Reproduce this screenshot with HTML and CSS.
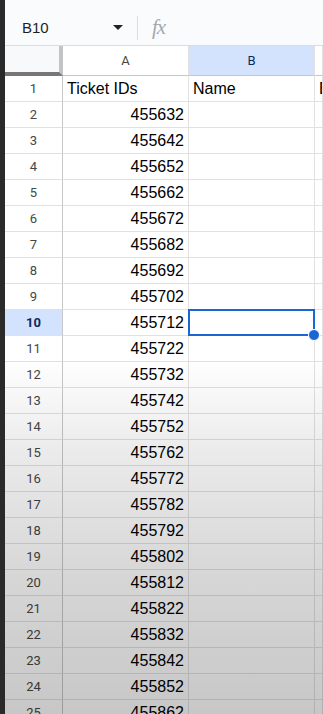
FILE: index.html
```html
<!DOCTYPE html>
<html lang="en">
<head>
  <meta charset="UTF-8" />
  <meta name="viewport" content="width=device-width, initial-scale=1.0" />
  <title>Ticket IDs - Sheet</title>
  <link rel="stylesheet" href="styles.css">
</head>
<body>

  <div class="strip"></div>

  <div class="main">
    <div class="formula-bar">
      <div class="name-box">B10</div>
      <div class="caret"></div>
      <div class="divider"></div>
      <div class="fx">fx</div>
    </div>

    <div class="sheet">
      <div class="corner"></div>
      <div class="col-head">A</div>
      <div class="col-head selected">B</div>
      <div class="col-head"></div>

      <div class="row-head">1</div><div class="cell text">Ticket IDs</div><div class="cell text">Name</div><div class="cell text">Email</div>
      <div class="row-head">2</div><div class="cell num">455632</div><div class="cell"></div><div class="cell"></div>
      <div class="row-head">3</div><div class="cell num">455642</div><div class="cell"></div><div class="cell"></div>
      <div class="row-head">4</div><div class="cell num">455652</div><div class="cell"></div><div class="cell"></div>
      <div class="row-head">5</div><div class="cell num">455662</div><div class="cell"></div><div class="cell"></div>
      <div class="row-head">6</div><div class="cell num">455672</div><div class="cell"></div><div class="cell"></div>
      <div class="row-head">7</div><div class="cell num">455682</div><div class="cell"></div><div class="cell"></div>
      <div class="row-head">8</div><div class="cell num">455692</div><div class="cell"></div><div class="cell"></div>
      <div class="row-head">9</div><div class="cell num">455702</div><div class="cell"></div><div class="cell"></div>
      <div class="row-head selected">10</div><div class="cell num">455712</div><div class="cell active"></div><div class="cell"></div>
      <div class="row-head">11</div><div class="cell num">455722</div><div class="cell"></div><div class="cell"></div>
      <div class="row-head">12</div><div class="cell num">455732</div><div class="cell"></div><div class="cell"></div>
      <div class="row-head">13</div><div class="cell num">455742</div><div class="cell"></div><div class="cell"></div>
      <div class="row-head">14</div><div class="cell num">455752</div><div class="cell"></div><div class="cell"></div>
      <div class="row-head">15</div><div class="cell num">455762</div><div class="cell"></div><div class="cell"></div>
      <div class="row-head">16</div><div class="cell num">455772</div><div class="cell"></div><div class="cell"></div>
      <div class="row-head">17</div><div class="cell num">455782</div><div class="cell"></div><div class="cell"></div>
      <div class="row-head">18</div><div class="cell num">455792</div><div class="cell"></div><div class="cell"></div>
      <div class="row-head">19</div><div class="cell num">455802</div><div class="cell"></div><div class="cell"></div>
      <div class="row-head">20</div><div class="cell num">455812</div><div class="cell"></div><div class="cell"></div>
      <div class="row-head">21</div><div class="cell num">455822</div><div class="cell"></div><div class="cell"></div>
      <div class="row-head">22</div><div class="cell num">455832</div><div class="cell"></div><div class="cell"></div>
      <div class="row-head">23</div><div class="cell num">455842</div><div class="cell"></div><div class="cell"></div>
      <div class="row-head">24</div><div class="cell num">455852</div><div class="cell"></div><div class="cell"></div>
      <div class="row-head">25</div><div class="cell num">455862</div><div class="cell"></div><div class="cell"></div>
    </div>
  </div>

</body>
</html>
```

FILE: styles.css
```css
* {
  margin: 0;
  padding: 0;
  box-sizing: border-box;
}

body {
  display: flex;
  height: 714px;
  overflow: hidden;
  background: #ffffff;
  font-family: "Liberation Sans", Arial, sans-serif;
}

.strip {
  width: 5px;
  flex-shrink: 0;
  background: #2a2a2a;
}

.main {
  position: relative;
  flex: 1;
  overflow: hidden;
}

/* darkening towards the bottom of the frame */
.main::after {
  content: "";
  position: absolute;
  inset: 0;
  pointer-events: none;
  background: linear-gradient(to bottom,
    rgba(0,0,0,0) 50%,
    rgba(0,0,0,0.08) 63%,
    rgba(0,0,0,0.16) 81%,
    rgba(0,0,0,0.22) 100%);
}

.formula-bar {
  height: 46px;
  display: flex;
  align-items: center;
  padding: 10px 0 0 17px;
  background: #f9fbfd;
  border-bottom: 1px solid #dadce0;
}

.name-box {
  width: 91px;
  font-size: 15px;
  color: #1f1f1f;
}

.caret {
  width: 0;
  height: 0;
  border-left: 5px solid transparent;
  border-right: 5px solid transparent;
  border-top: 5px solid #222222;
  margin-right: 14px;
}

.divider {
  width: 1px;
  height: 24px;
  background: #dadce0;
  margin-right: 14px;
}

.fx {
  font-family: "Liberation Serif", serif;
  font-style: italic;
  font-size: 21px;
  color: #a8a8a8;
  letter-spacing: -1px;
}

.sheet {
  display: grid;
  grid-template-columns: 58px 126px 126px 1fr;
  grid-template-rows: 30px;
  grid-auto-rows: 26px;
}

.corner {
  background: #f8f9fa;
  border-right: 4px solid #c4c4c4;
  border-bottom: 4px solid #777777;
}

.col-head {
  display: flex;
  align-items: center;
  justify-content: center;
  font-family: Roboto, sans-serif;
  font-size: 13px;
  color: #444746;
  background: #ffffff;
  border-right: 1px solid #e1e1e1;
  border-bottom: 1px solid #c7c7c7;
}

.col-head.selected {
  background: #d3e3fd;
  color: #0b2a5c;
}

.row-head {
  display: flex;
  align-items: center;
  justify-content: center;
  font-family: Roboto, sans-serif;
  font-size: 13px;
  color: #444746;
  border-right: 1px solid #c7c7c7;
  border-bottom: 1px solid #e1e1e1;
}

.row-head.selected {
  background: #d3e3fd;
  color: #0b2a5c;
  font-weight: bold;
}

.cell {
  display: flex;
  align-items: center;
  font-size: 16px;
  color: #000000;
  white-space: nowrap;
  overflow: hidden;
  border-right: 1px solid #e1e1e1;
  border-bottom: 1px solid #e1e1e1;
}

.cell.num {
  justify-content: flex-end;
  padding-right: 4px;
}

.cell.text {
  padding-left: 4px;
}

.cell.active {
  position: relative;
  overflow: visible;
}

.cell.active::before {
  content: "";
  position: absolute;
  top: -1px;
  left: -1px;
  right: -1px;
  bottom: -1px;
  border: 2px solid #1a66d4;
}

.cell.active::after {
  content: "";
  position: absolute;
  right: -6px;
  bottom: -6px;
  width: 10px;
  height: 10px;
  border-radius: 50%;
  background: #1a66d4;
  border: 1px solid #ffffff;
  z-index: 2;
}
```
